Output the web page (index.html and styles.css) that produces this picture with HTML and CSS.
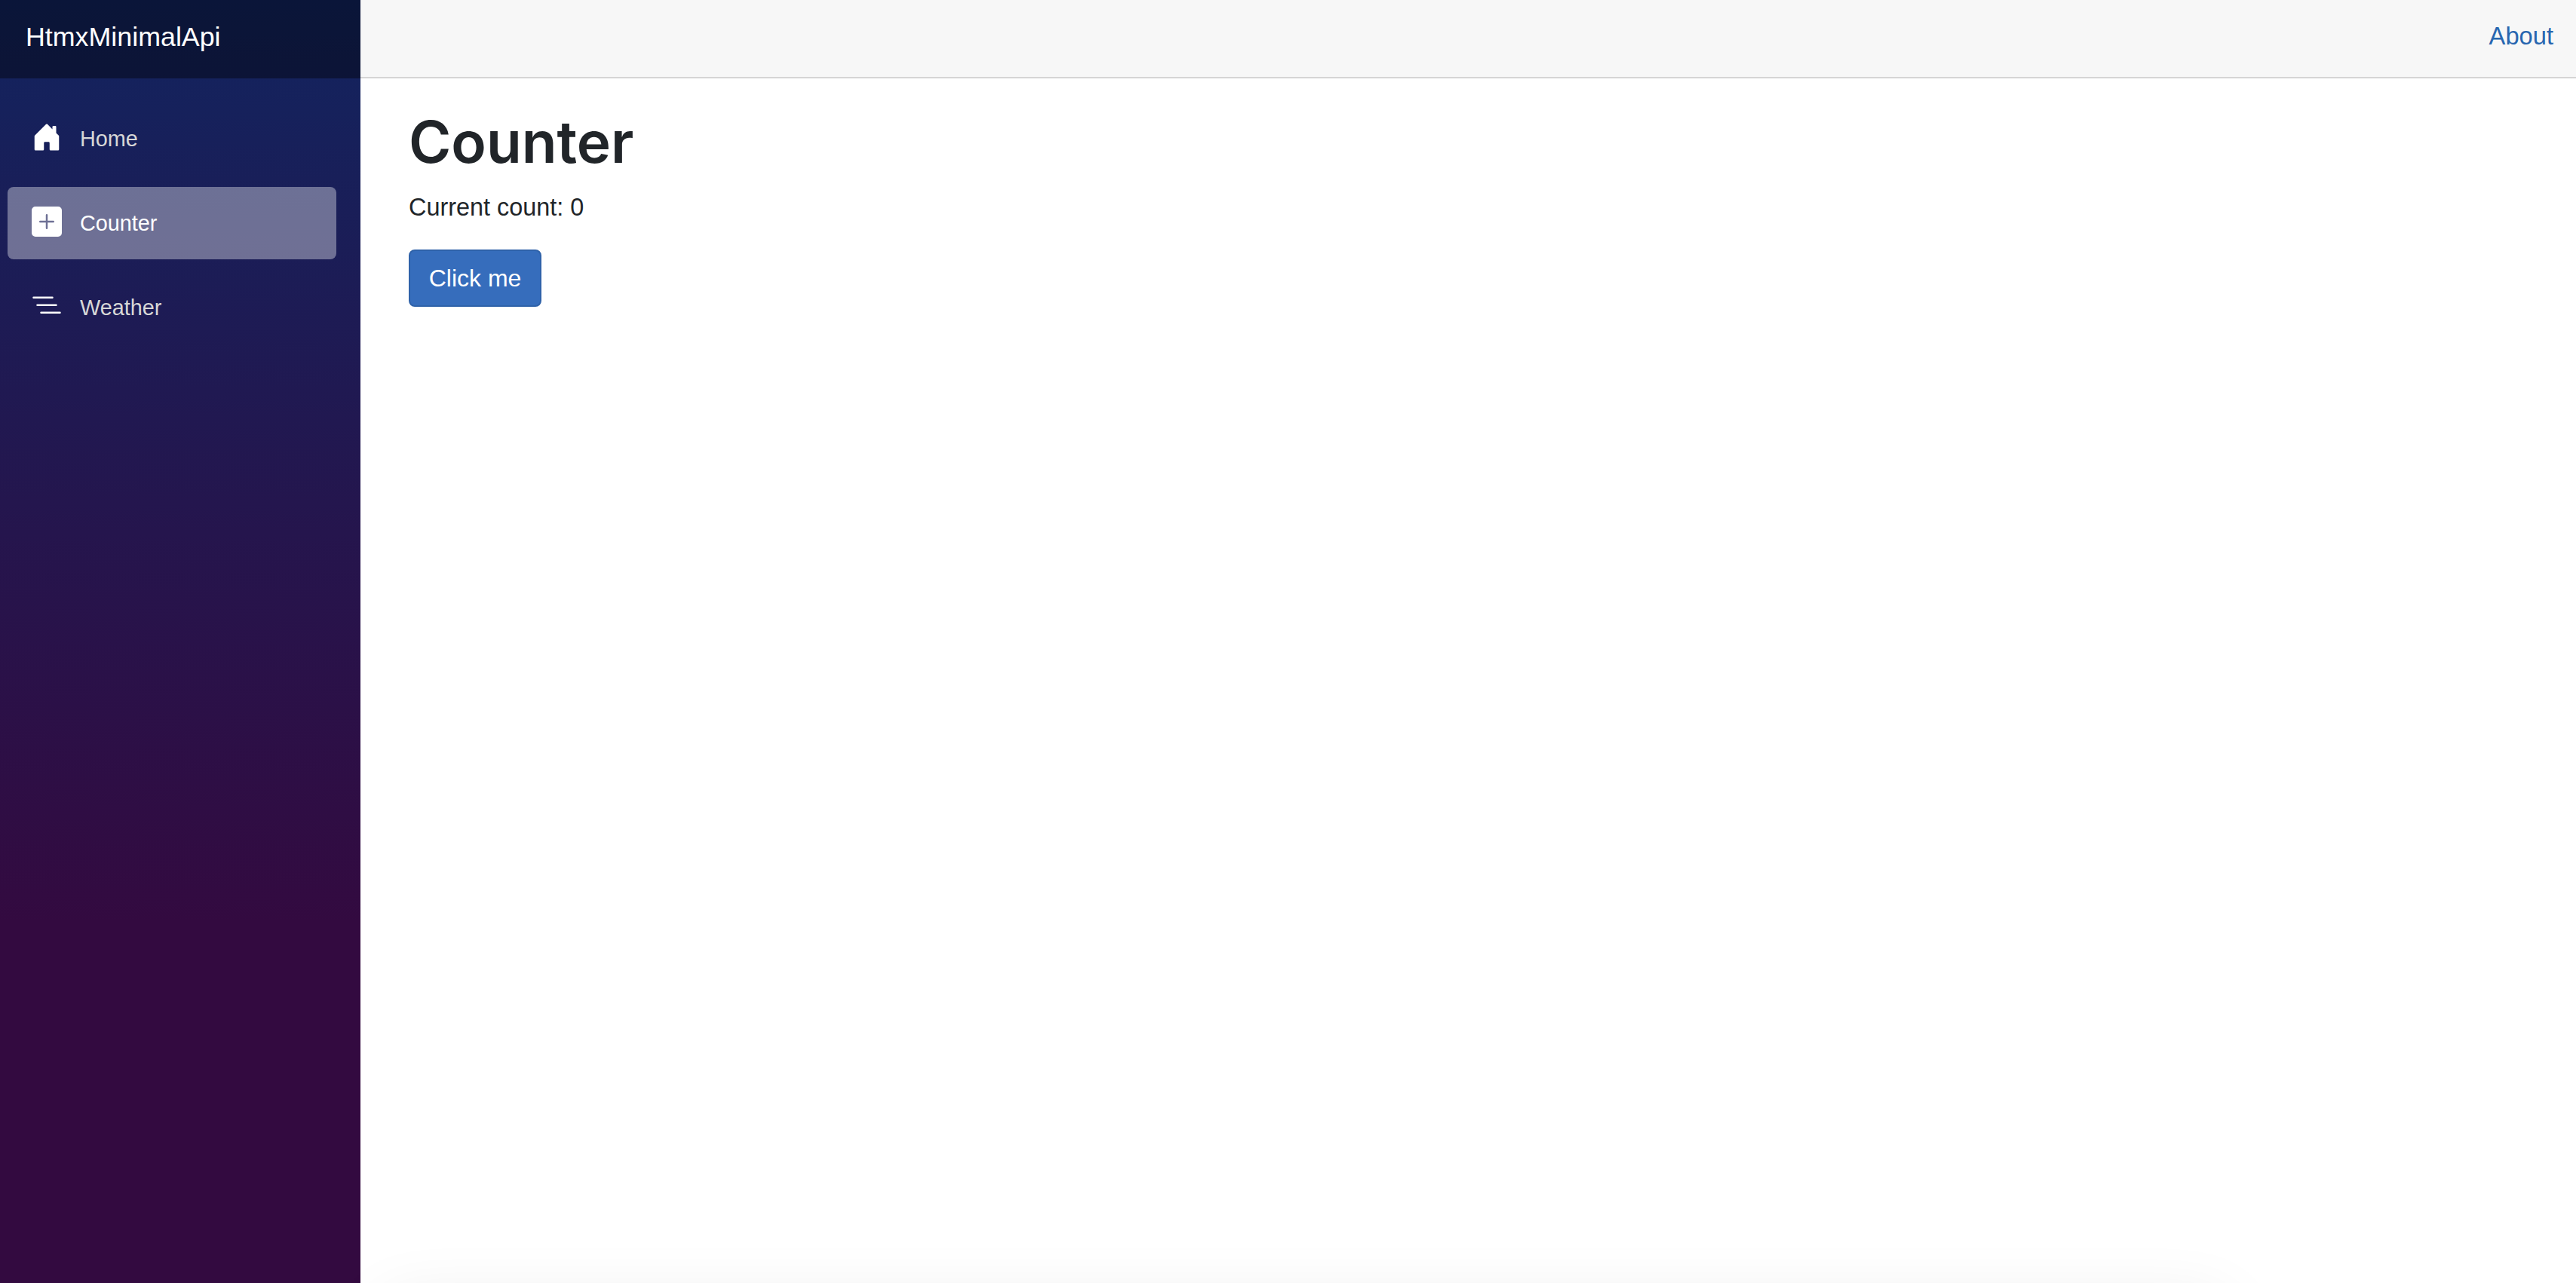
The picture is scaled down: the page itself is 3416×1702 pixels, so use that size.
FILE: index.html
```html
<!DOCTYPE html>
<html lang="en">
<head>
<meta charset="utf-8">
<title>Counter</title>
<link rel="stylesheet" href="styles.css">
</head>
<body>
<div class="page">
  <aside class="sidebar">
    <div class="brand-row"><a class="brand" href="#">HtmxMinimalApi</a></div>
    <nav class="nav">
      <a class="nav-link" href="#">
        <svg class="icon" viewBox="0 0 16 16"><path d="M6.5 14.5v-3.505c0-.245.25-.495.5-.495h2c.25 0 .5.25.5.5v3.5a.5.5 0 0 0 .5.5h4a.5.5 0 0 0 .5-.5v-7a.5.5 0 0 0-.146-.354L13 5.793V2.5a.5.5 0 0 0-.5-.5h-1a.5.5 0 0 0-.5.5v1.293L8.354 1.146a.5.5 0 0 0-.708 0l-6 6A.5.5 0 0 0 1.5 7.5v7a.5.5 0 0 0 .5.5h4a.5.5 0 0 0 .5-.5Z"/></svg>
        <span>Home</span>
      </a>
      <a class="nav-link active" href="#">
        <svg class="icon" viewBox="0 0 16 16"><path fill-rule="evenodd" d="M2 0a2 2 0 0 0-2 2v12a2 2 0 0 0 2 2h12a2 2 0 0 0 2-2V2a2 2 0 0 0-2-2H2zm6.5 4.5v3h3a.5.5 0 0 1 0 1h-3v3a.5.5 0 0 1-1 0v-3h-3a.5.5 0 0 1 0-1h3v-3a.5.5 0 0 1 1 0z"/></svg>
        <span>Counter</span>
      </a>
      <a class="nav-link" href="#">
        <svg class="icon" viewBox="0 0 16 16"><path fill-rule="evenodd" d="M4.5 11.5A.5.5 0 0 1 5 11h10a.5.5 0 0 1 0 1H5a.5.5 0 0 1-.5-.5zm-2-4A.5.5 0 0 1 3 7h10a.5.5 0 0 1 0 1H3a.5.5 0 0 1-.5-.5zm-2-4A.5.5 0 0 1 1 3h10a.5.5 0 0 1 0 1H1a.5.5 0 0 1-.5-.5z"/></svg>
        <span>Weather</span>
      </a>
    </nav>
  </aside>
  <main class="main">
    <div class="top-row"><a class="about" href="#">About</a></div>
    <article class="content">
      <h1 class="title">Counter</h1>
      <p class="count">Current count: 0</p>
      <button class="btn" type="button">Click me</button>
    </article>
  </main>
</div>
<div class="edge-shadow"></div>
</body>
</html>
```
FILE: styles.css
```css
* { box-sizing: border-box; }
html, body { margin: 0; height: 100%; overflow: hidden; }
body {
  font-family: "Liberation Sans", Arial, sans-serif;
  font-size: 32px;
  color: #212529;
  background: #fff;
}
a { text-decoration: none; }
.page { display: flex; height: 100vh; }
.sidebar {
  width: 478px;
  flex: none;
  background-image: linear-gradient(180deg, #12245f 0%, #330a40 72%);
}
.brand-row {
  height: 104px;
  display: flex;
  align-items: center;
  padding: 0 0 6px 34px;
  background: rgba(0, 0, 0, 0.4);
}
.brand { color: #fff; font-size: 35.8px; }
.nav {
  display: flex;
  flex-direction: column;
  gap: 16px;
  padding: 32px 32px 0 10px;
}
.nav-link {
  height: 96px;
  display: flex;
  align-items: center;
  gap: 24px;
  padding-left: 32px;
  border-radius: 8px;
  color: #d7d7d7;
  font-size: 28.8px;
}
.nav-link.active { background: rgba(255, 255, 255, 0.37); color: #fff; }
.icon { width: 40px; height: 40px; margin-bottom: 4px; fill: #fff; flex: none; }
.main { flex: 1; min-width: 0; }
.top-row {
  height: 104px;
  display: flex;
  align-items: center;
  justify-content: flex-end;
  padding: 0 30px 6px 0;
  background: #f7f7f7;
  border-bottom: 2px solid #d6d5d5;
}
.about { color: #2866b0; font-size: 32.7px; }
.content { padding: 38px 0 0 64px; }
.title {
  margin: 0 0 17px;
  font-family: Inter, "Liberation Sans", sans-serif;
  font-size: 76.5px;
  line-height: 92px;
  font-weight: 600;
}
.count { margin: 0 0 32px; line-height: 48px; font-size: 32.4px; }
.btn {
  display: block;
  width: 176px;
  height: 76px;
  padding: 0;
  font: inherit;
  color: #fff;
  background: #366dbc;
  border: 2px solid #2f62a9;
  border-radius: 8px;
}
.edge-shadow {
  position: fixed;
  left: 520px;
  width: 2420px;
  top: 1740px;
  height: 60px;
  box-shadow: 0 0 90px 10px rgba(0, 0, 0, 0.09);
}
```
